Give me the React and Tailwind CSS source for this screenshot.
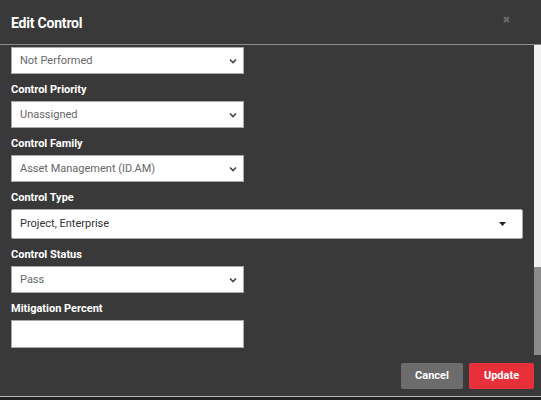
import React from "react";

const font = { fontFamily: '"Roboto", "Liberation Sans", sans-serif' };

function Chevron() {
  return (
    <svg width="8" height="6" viewBox="0 0 8 6" className="shrink-0">
      <path d="M1 1.5 L4 4.5 L7 1.5" fill="none" stroke="#444" strokeWidth="1.6" />
    </svg>
  );
}

function Select({ value, dark }) {
  return (
    <div className="flex h-[27px] w-[233px] items-center justify-between border border-[#a9a9a9] bg-white pl-[8px] pr-[6px]">
      <span className={`pt-[2px] text-[11px] ${dark ? "text-[#333]" : "text-[#666]"}`}>{value}</span>
      <Chevron />
    </div>
  );
}

function Label({ children }) {
  return <div className="mt-[8px] mb-[3px] h-[16px] text-[11px] leading-[16px] font-bold text-white">{children}</div>;
}

export default function App() {
  return (
    <div className="h-[400px] w-[541px] bg-[#222]" style={font}>
      <div className="flex h-[397px] flex-col border-b border-[#bbb] bg-[#393939]">
        <div className="flex h-[45px] shrink-0 items-center justify-between border-b border-[#8c8c8c] pl-[11px] pr-[31px] pt-[2px]">
          <span className="text-[14px] font-bold tracking-[-0.2px] text-white">Edit Control</span>
          <svg width="7" height="7" viewBox="0 0 7 7" className="mb-[8px]">
            <path d="M1 1 L6 6 M6 1 L1 6" stroke="#6a6a6a" strokeWidth="2" />
          </svg>
        </div>
        <div className="flex h-[310px] shrink-0">
          <div className="flex-1 pl-[11px] pt-[2px]">
            <Select value="Not Performed" />
            <Label>Control Priority</Label>
            <Select value="Unassigned" />
            <Label>Control Family</Label>
            <Select value="Asset Management (ID.AM)" />
            <Label>Control Type</Label>
            <div className="flex h-[30px] w-[512px] items-center justify-between rounded-[2px] border border-[#a9a9a9] bg-white pl-[8px] pr-[16px]">
              <span className="pt-[1px] text-[11px] text-[#333]">Project, Enterprise</span>
              <svg width="7" height="4" viewBox="0 0 7 4">
                <path d="M0 0 L7 0 L3.5 4 Z" fill="#222" />
              </svg>
            </div>
            <Label>Control Status</Label>
            <Select value="Pass" />
            <Label>Mitigation Percent</Label>
            <div className="h-[28px] w-[233px] border border-[#a9a9a9] bg-white" />
          </div>
          <div className="flex w-[7px] flex-col bg-[#f1f1f1]">
            <div className="h-[222px]" />
            <div className="flex-1 bg-[#8a8a8a]" />
          </div>
        </div>
        <div className="flex flex-1 items-start justify-end gap-[6px] pr-[7px] pt-[8px]">
          <button className="h-[26px] w-[62px] rounded-[2px] bg-[#6c6c6c] text-[11px] font-bold text-white">Cancel</button>
          <button className="h-[26px] w-[65px] rounded-[2px] bg-[#e8303a] text-[11px] font-bold text-white">Update</button>
        </div>
      </div>
    </div>
  );
}
